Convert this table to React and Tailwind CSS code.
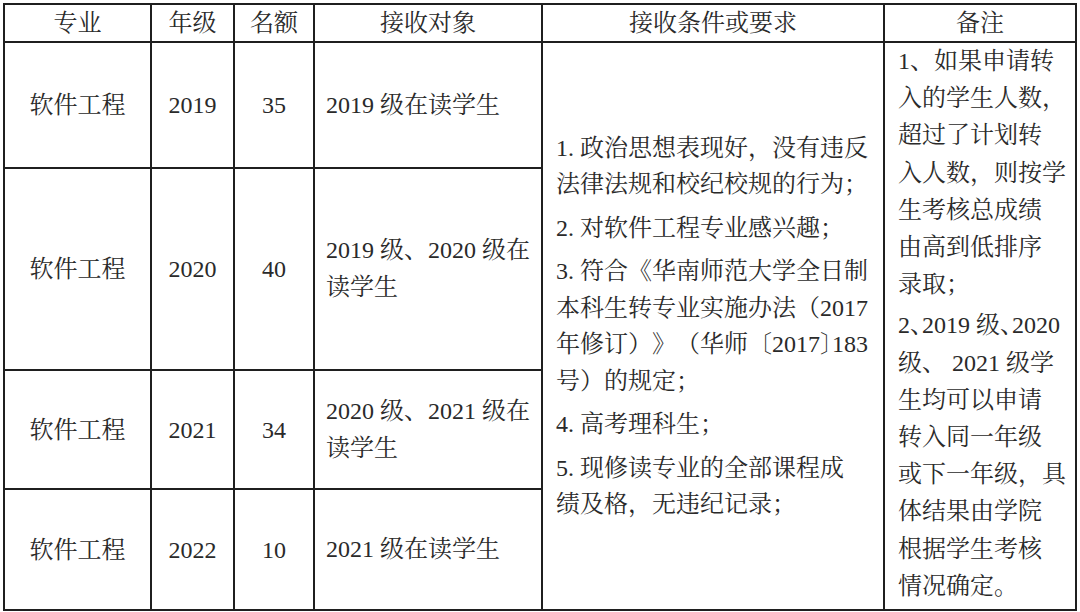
import React from 'react'

const line = 'border-r-2 border-b-2 border-[#1f1f1f]'

// 标点压缩为半个字宽
function Half({ children }) {
  return <span className="[font-feature-settings:'halt']">{children}</span>
}

const rows = [
  { year: '2019', quota: '35', target: ['2019 级在读学生'] },
  { year: '2020', quota: '40', target: ['2019 级、2020 级在', '读学生'] },
  { year: '2021', quota: '34', target: ['2020 级、2021 级在', '读学生'] },
  { year: '2022', quota: '10', target: ['2021 级在读学生'] },
]

const headers = ['专业', '年级', '名额', '接收对象', '接收条件或要求', '备注']

const conditions = [
  ['1. 政治思想表现好，没有违反', '法律法规和校纪校规的行为；'],
  ['2. 对软件工程专业感兴趣；'],
  [
    '3. 符合《华南师范大学全日制',
    '本科生转专业实施办法（2017',
    <span className="[text-spacing-trim:space-all]">年修订）》（华师〔2017<Half>〕</Half>183</span>,
    '号）的规定；',
  ],
  ['4. 高考理科生；'],
  ['5. 现修读专业的全部课程成', '绩及格，无违纪记录；'],
]

const notes = [
  ['1、如果申请转', '入的学生人数，', '超过了计划转', '入人数，则按学', '生考核总成绩', '由高到低排序', '录取；'],
  [
    <>2<Half>、</Half>2019 级<Half>、</Half>2020</>,
    '级、 2021 级学',
    '生均可以申请',
    '转入同一年级',
    '或下一年级，具',
    '体结果由学院',
    '根据学生考核',
    '情况确定。',
  ],
]

export default function App() {
  return (
    <div className="w-[1080px] h-[612px] bg-white pl-[3px] pt-[3px] text-[24px] text-[#2a2a2a] font-['Liberation_Serif','Noto_Serif_CJK_SC','Noto_Sans_CJK_SC',serif] overflow-hidden">
      <div className="grid grid-cols-[147px_83px_80px_228px_342px_192px] grid-rows-[38px_126px_202px_119px_121px] w-fit border-l-2 border-t-2 border-[#1f1f1f]">
        {headers.map((h) => (
          <div key={h} className={`${line} flex items-center justify-center leading-none`}>
            {h}
          </div>
        ))}

        {rows.map((r, i) => (
          <React.Fragment key={r.year}>
            <div className={`${line} flex items-center justify-center`} style={{ gridRowStart: i + 2 }}>
              软件工程
            </div>
            <div className={`${line} flex items-center justify-center`} style={{ gridRowStart: i + 2 }}>
              {r.year}
            </div>
            <div className={`${line} flex items-center justify-center`} style={{ gridRowStart: i + 2 }}>
              {r.quota}
            </div>
            <div className={`${line} flex flex-col justify-center pl-[11px] leading-[37px] whitespace-nowrap`} style={{ gridRowStart: i + 2 }}>
              {r.target.map((t) => (
                <div key={t}>{t}</div>
              ))}
            </div>
          </React.Fragment>
        ))}

        <div className={`${line} col-start-5 row-start-2 row-span-4 flex flex-col justify-center gap-[7px] pl-[13px] leading-[36.5px] whitespace-nowrap`}>
          {conditions.map((p, i) => (
            <div key={i}>
              {p.map((l, j) => (
                <div key={j}>{l}</div>
              ))}
            </div>
          ))}
        </div>

        <div className={`${line} col-start-6 row-start-2 row-span-4 flex flex-col gap-[4px] pl-[13px] leading-[37.2px] whitespace-nowrap`}>
          {notes.map((p, i) => (
            <div key={i}>
              {p.map((l, j) => (
                <div key={j}>{l}</div>
              ))}
            </div>
          ))}
        </div>
      </div>
    </div>
  )
}
